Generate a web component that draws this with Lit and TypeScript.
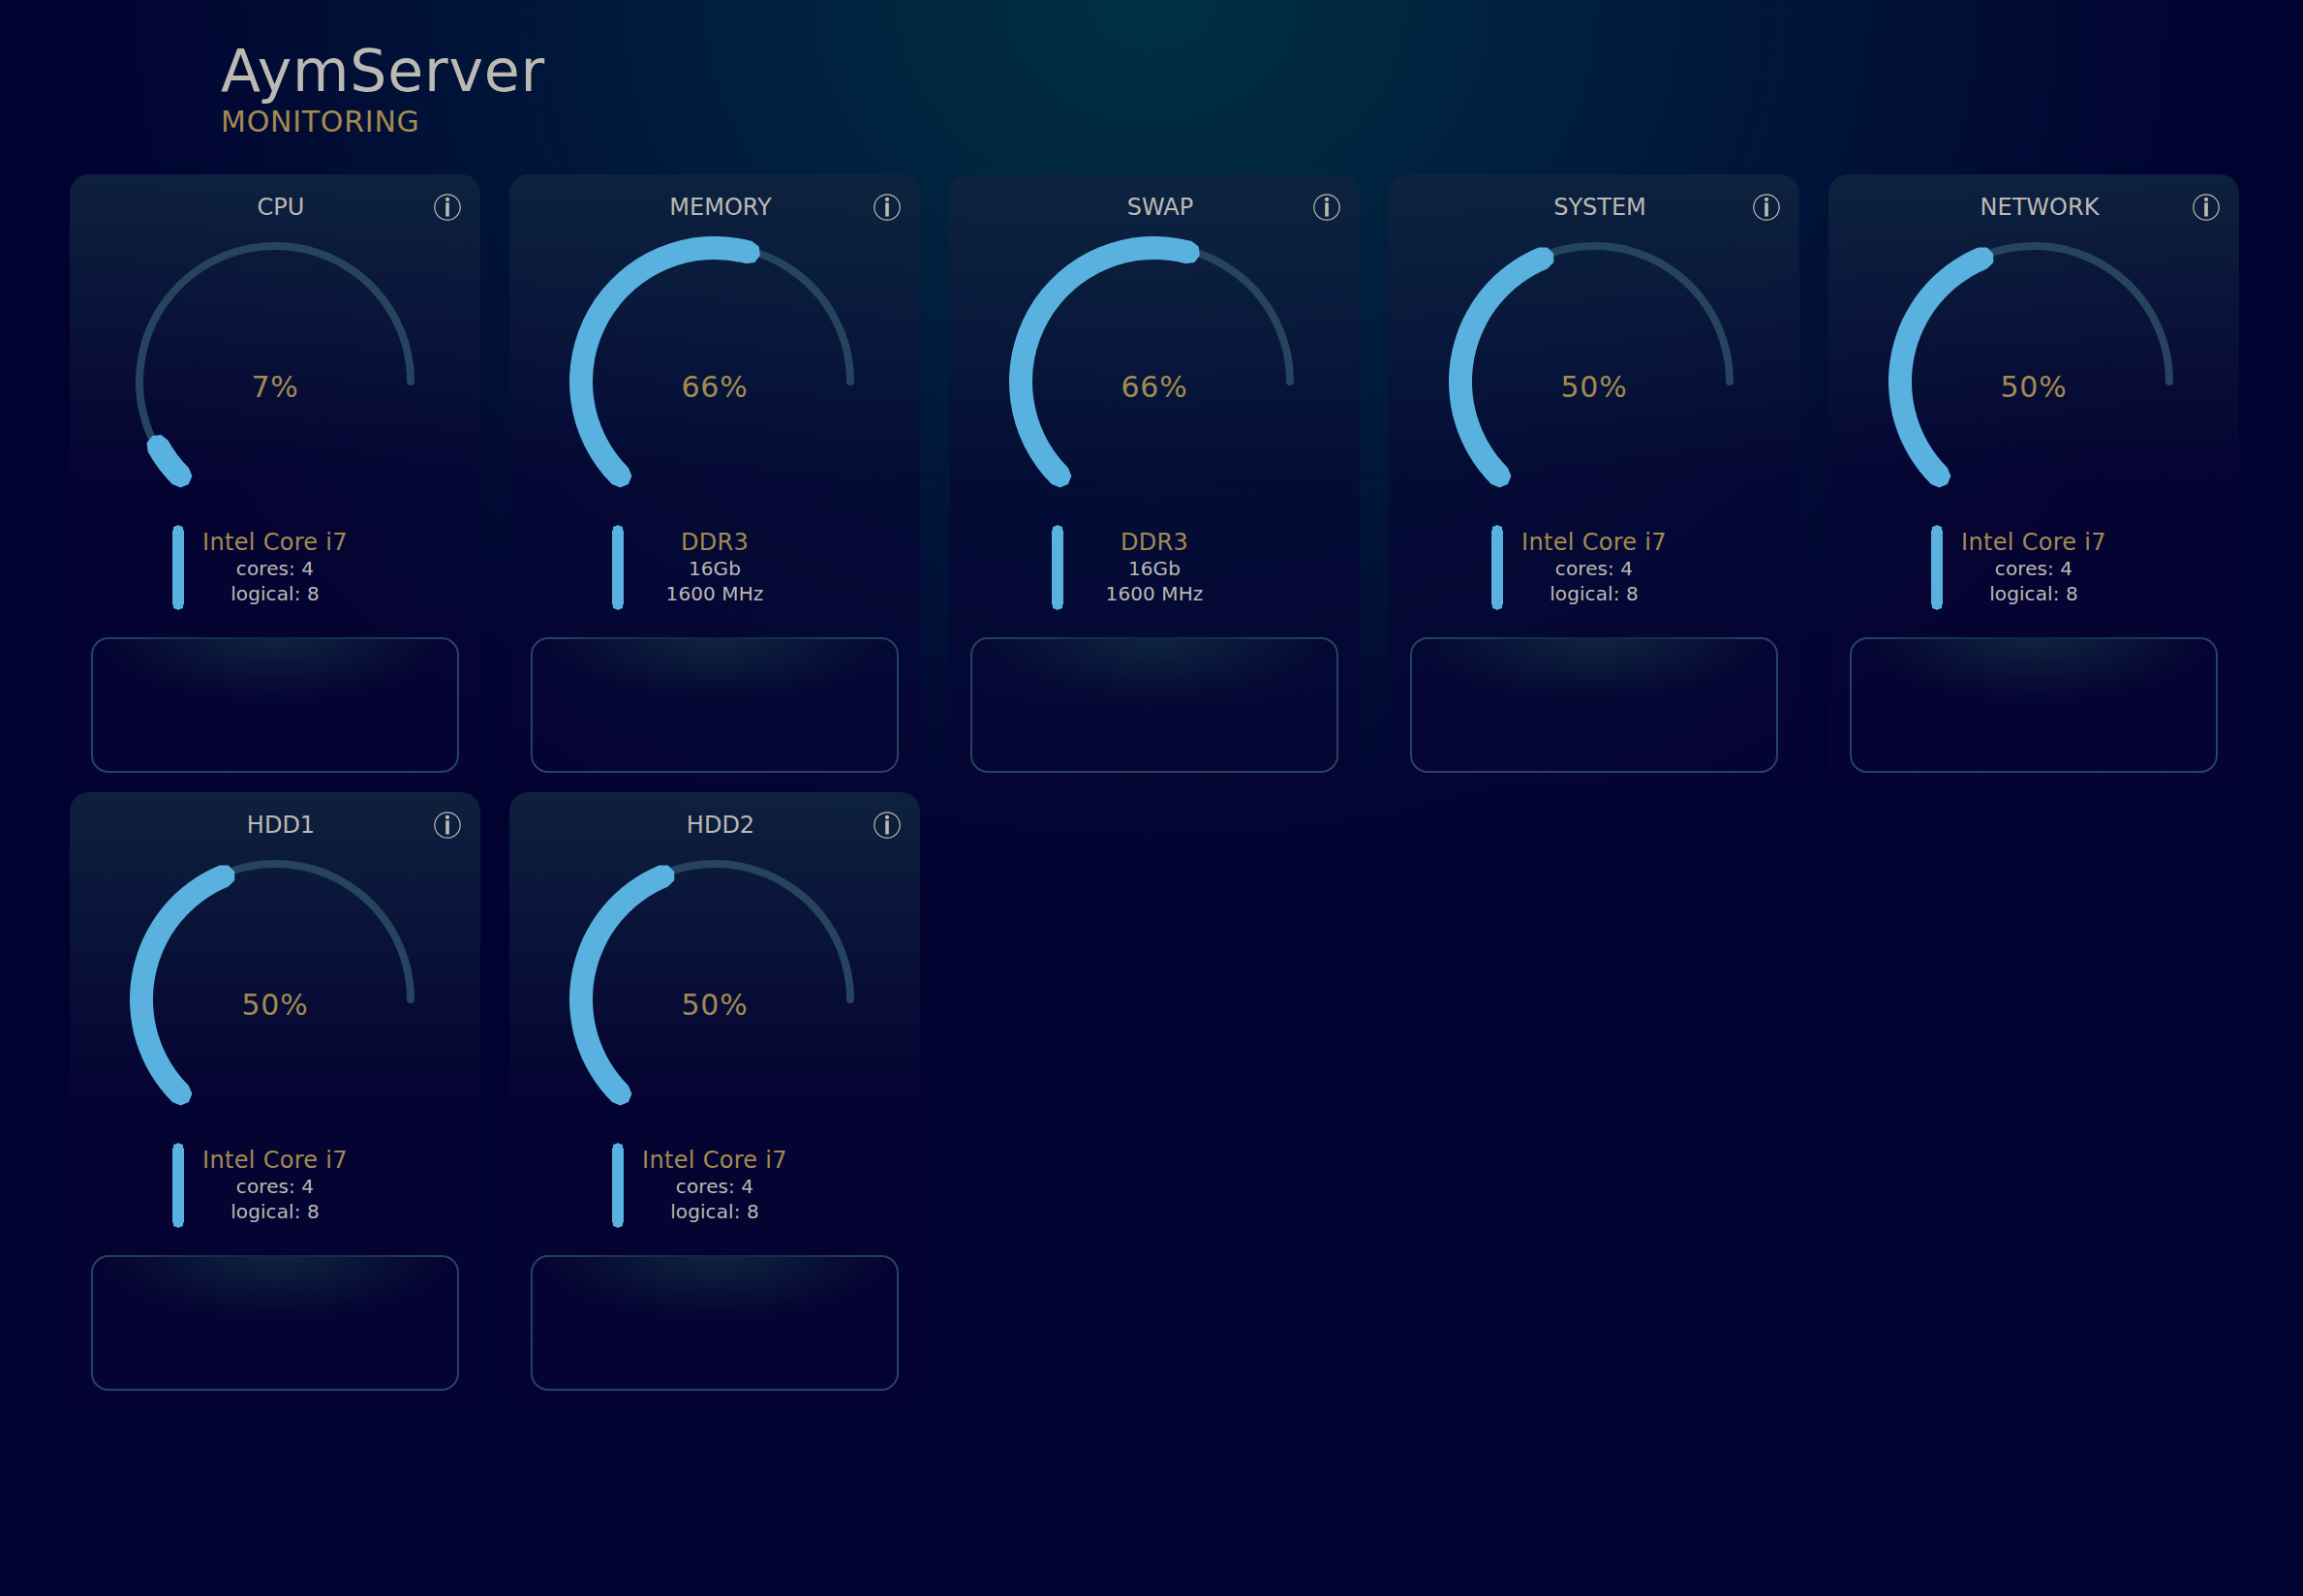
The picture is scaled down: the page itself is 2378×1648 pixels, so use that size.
import { LitElement, html, css } from "lit";
import { customElement, property } from "lit/decorators.js";

interface Metric {
  name: string;
  value: number;
  angle: number;
  title: string;
  lines: string[];
}

const CPU_INFO = { title: "Intel Core i7", lines: ["cores: 4", "logical: 8"] };
const RAM_INFO = { title: "DDR3", lines: ["16Gb", "1600 MHz"] };

const METRICS: Metric[] = [
  { name: "CPU", value: 7, angle: 16.2, ...CPU_INFO },
  { name: "MEMORY", value: 66, angle: 149.8, ...RAM_INFO },
  { name: "SWAP", value: 66, angle: 149.8, ...RAM_INFO },
  { name: "SYSTEM", value: 50, angle: 112.5, ...CPU_INFO },
  { name: "NETWORK", value: 50, angle: 112.5, ...CPU_INFO },
  { name: "HDD1", value: 50, angle: 112.5, ...CPU_INFO },
  { name: "HDD2", value: 50, angle: 112.5, ...CPU_INFO },
];

const START = 135;

function polar(cx: number, cy: number, r: number, deg: number): string {
  const a = (deg * Math.PI) / 180;
  return `${(cx + r * Math.cos(a)).toFixed(2)} ${(cy + r * Math.sin(a)).toFixed(2)}`;
}

// Thick arc closed by faceted half-octagon caps at both ends.
function valueArc(cx: number, cy: number, r: number, half: number, sweep: number): string {
  const end = START + sweep;
  const rad = Math.PI / 180;
  const cap = (at: number, from: number) => {
    const x = cx + r * Math.cos(at * rad);
    const y = cy + r * Math.sin(at * rad);
    return [45, 90, 135].map((d) => "L" + polar(x, y, half, from + d)).join(" ");
  };
  const large = sweep > 180 ? 1 : 0;
  return [
    "M" + polar(cx, cy, r + half, START),
    `A${r + half} ${r + half} 0 ${large} 1 ` + polar(cx, cy, r + half, end),
    cap(end, end),
    "L" + polar(cx, cy, r - half, end),
    `A${r - half} ${r - half} 0 ${large} 0 ` + polar(cx, cy, r - half, START),
    cap(START, START + 180),
    "Z",
  ].join(" ");
}

@customElement("metric-card")
export class MetricCard extends LitElement {
  @property({ attribute: false }) metric!: Metric;

  static styles = css`
    :host {
      display: flex;
      flex-direction: column;
      box-sizing: border-box;
      height: 628px;
      border-radius: 20px;
      background: linear-gradient(
        to bottom,
        rgba(14, 35, 63, 0.92) 0%,
        rgba(7, 4, 51, 0.56) 50%,
        rgba(7, 4, 51, 0.5) 100%
      );
      color: #bbb9b2;
    }
    .head {
      display: grid;
      grid-template-columns: 1fr auto 1fr;
      align-items: center;
      height: 67px;
      padding: 0 20px 0 32px;
    }
    .name {
      grid-column: 2;
      font-size: 24px;
      line-height: 69px;
    }
    .info {
      justify-self: end;
      display: block;
      margin-bottom: 2px;
    }
    .gauge {
      display: block;
      width: 424px;
      height: 295px;
      overflow: visible;
    }
    .percent {
      fill: #a38a50;
      font-size: 30px;
      letter-spacing: 0.8px;
    }
    .detail {
      display: grid;
      grid-template-columns: 106px 12px 188px 1fr;
      height: 88px;
    }
    .bar {
      grid-column: 2;
      display: block;
    }
    .text {
      padding-top: 4px;
      text-align: center;
      white-space: nowrap;
    }
    .title {
      color: #a38a50;
      font-size: 24px;
      line-height: 28px;
      letter-spacing: 0.3px;
    }
    .line {
      font-size: 20px;
      line-height: 26px;
      letter-spacing: 0.1px;
    }
    .chart {
      position: relative;
      box-sizing: border-box;
      width: 380px;
      height: 140px;
      margin: 28px 22px 0;
      border: 2px solid #26445f;
      border-radius: 18px;
    }
    .chart::after {
      content: "";
      position: absolute;
      inset: -2px;
      border-radius: 18px;
      background: radial-gradient(184px 67px at 50% 0, rgba(14, 36, 63, 1), rgba(6, 12, 50, 0));
    }
  `;

  render() {
    const m = this.metric;
    return html`
      <div class="head">
        <span class="name">${m.name}</span>
        <svg class="info" width="28" height="28" viewBox="0 0 28 28">
          <circle cx="14" cy="14" r="13.2" fill="none" stroke="#bbb9b2" stroke-width="1.2" />
          <circle cx="14" cy="5.9" r="2.1" fill="#bbb9b2" />
          <rect x="12.2" y="9.3" width="3.6" height="14.2" fill="#bbb9b2" />
        </svg>
      </div>
      <svg class="gauge" viewBox="0 67 424 295">
        <path
          d=${`M${polar(212, 214, 140, START)} A140 140 0 1 1 352 214`}
          fill="none"
          stroke="#26445f"
          stroke-width="8"
          stroke-linecap="round"
        />
        <path d=${valueArc(212, 214, 138, 12, m.angle)} fill="#58b1de" />
        <text class="percent" x="212" y="230" text-anchor="middle">${m.value}%</text>
      </svg>
      <div class="detail">
        <svg class="bar" width="12" height="88" viewBox="0 0 12 88">
          <path
            d="M0 6 L1 5 V2 L4 1 L6 0 L8 1 L11 2 V5 L12 6 V82 L11 83 V86 L8 87 L6 88 L4 87 L1 86 V83 L0 82 Z"
            fill="#58b1de"
          />
        </svg>
        <div class="text">
          <div class="title">${m.title}</div>
          ${m.lines.map((l) => html`<div class="line">${l}</div>`)}
        </div>
      </div>
      <div class="chart"></div>
    `;
  }
}

@customElement("app-root")
export class AppRoot extends LitElement {
  static styles = css`
    :host {
      display: block;
      box-sizing: border-box;
      min-height: 1648px;
      padding: 0 66px 0 72px;
      font-family: Verdana, "DejaVu Sans", sans-serif;
      background: #020230
        radial-gradient(1130px 930px at 50% 0, #003044 0%, #001a3b 48%, #020230 100%) no-repeat;
    }
    .banner {
      box-sizing: border-box;
      height: 180px;
      padding: 37px 0 0 156px;
    }
    .brand {
      margin: 0;
      font-size: 60px;
      font-weight: 400;
      line-height: 72px;
      color: #bbb9b2;
      letter-spacing: 0.8px;
    }
    .sub {
      font-size: 30px;
      line-height: 34px;
      color: #a38a50;
      letter-spacing: 0.75px;
    }
    .cards {
      display: grid;
      grid-template-columns: repeat(5, 424px);
      gap: 10px 30px;
    }
  `;

  render() {
    return html`
      <header class="banner">
        <h1 class="brand">AymServer</h1>
        <div class="sub">MONITORING</div>
      </header>
      <main class="cards">
        ${METRICS.map((m) => html`<metric-card .metric=${m}></metric-card>`)}
      </main>
    `;
  }
}
